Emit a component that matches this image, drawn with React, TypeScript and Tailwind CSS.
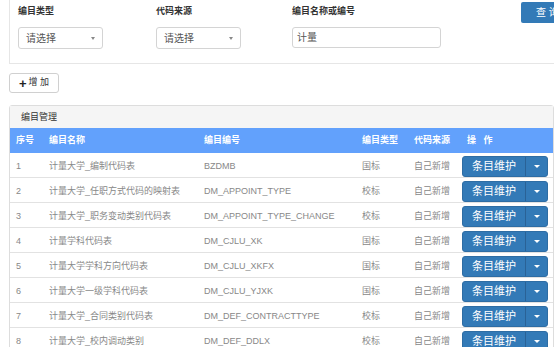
import React from "react";

const rows = [
  ["1", "计量大学_编制代码表", "BZDMB", "国标"],
  ["2", "计量大学_任职方式代码的映射表", "DM_APPOINT_TYPE", "校标"],
  ["3", "计量大学_职务变动类别代码表", "DM_APPOINT_TYPE_CHANGE", "校标"],
  ["4", "计量学科代码表", "DM_CJLU_XK", "国标"],
  ["5", "计量大学学科方向代码表", "DM_CJLU_XKFX", "国标"],
  ["6", "计量大学一级学科代码表", "DM_CJLU_YJXK", "国标"],
  ["7", "计量大学_合同类别代码表", "DM_DEF_CONTRACTTYPE", "校标"],
  ["8", "计量大学_校内调动类别", "DM_DEF_DDLX", "校标"],
];

const cols = "grid grid-cols-[32px_156px_158px_52px_48px_1fr]";

function Select() {
  return (
    <div className="mt-[10px] flex h-[22px] w-[85px] items-center justify-between rounded-[3px] border border-[#d4d4d4] bg-white pl-[7px] pr-[7px] text-[10px] text-[#555]">
      <span>请选择</span>
      <span className="h-0 w-0 border-l-[2.5px] border-r-[2.5px] border-t-[3px] border-l-transparent border-r-transparent border-t-[#888]" />
    </div>
  );
}

export default function App() {
  return (
    <div
      className="h-[347px] w-[554px] overflow-hidden bg-white"
      style={{ fontFamily: '"Liberation Sans", "Noto Sans CJK SC", sans-serif' }}
    >
      <div className="pl-[9px]">
        {/* search panel */}
        <div className="flex h-[64px] overflow-hidden border-b border-l border-[#e6e6e6]">
          <div className="ml-[8px] w-[138px] shrink-0">
            <div className="pt-[5px] text-[9px] font-bold leading-[12px] text-[#333]">编目类型</div>
            <Select />
          </div>
          <div className="w-[136px] shrink-0">
            <div className="pt-[5px] text-[9px] font-bold leading-[12px] text-[#333]">代码来源</div>
            <Select />
          </div>
          <div className="w-[229px] shrink-0">
            <div className="pt-[5px] text-[9px] font-bold leading-[12px] text-[#333]">编目名称或编号</div>
            <div className="mt-[10px] flex h-[21px] w-[149px] items-center rounded-[3px] border border-[#d4d4d4] pl-[4px] text-[10px] text-[#555]">
              计量
            </div>
          </div>
          <div className="mt-[2px] flex h-[21px] w-[50px] shrink-0 items-center rounded-[2px] bg-[#337ab7] pl-[15px] text-[10px] text-white">
            查&nbsp;询
          </div>
        </div>

        {/* add button */}
        <div className="mt-[9px] flex h-[20px] w-[50px] items-center rounded-[3px] border border-[#d0d0d0] bg-white pl-[9px] text-[9px] text-[#333]">
          <span className="mr-[2px] text-[13px] font-black leading-none text-[#222]">+</span>
          <span>增&nbsp;加</span>
        </div>

        {/* panel */}
        <div className="mt-[12px] rounded-t-[3px] border border-[#dddddd]">
          <div className="flex h-[22px] items-center bg-[#f5f5f5] pl-[11px] pt-[1px] text-[9px] text-[#333]">编目管理</div>
          <div className={`${cols} h-[25px] items-center bg-[#62a1fc] text-[9px] font-bold text-white`}>
            <div className="pl-[6px]">序号</div>
            <div className="pl-[7px]">编目名称</div>
            <div className="pl-[6px]">编目编号</div>
            <div className="pl-[6px]">编目类型</div>
            <div className="pl-[6px]">代码来源</div>
            <div className="pl-[11px]">操&nbsp;&nbsp;&nbsp;作</div>
          </div>
          {rows.map((r) => (
            <div key={r[0]} className={`${cols} h-[25px] items-start border-b border-[#e2e2e2] text-[9px] text-[#888]`}>
              <div className="pl-[6px] pt-[7px]">{r[0]}</div>
              <div className="pl-[7px] pt-[7px] whitespace-nowrap">{r[1]}</div>
              <div className="pl-[6px] pt-[7px] whitespace-nowrap">{r[2]}</div>
              <div className="pl-[6px] pt-[7px]">{r[3]}</div>
              <div className="pl-[6px] pt-[7px] whitespace-nowrap">自己新增</div>
              <div className="pl-[6px] pt-[3px]">
                <div className="flex h-[21px] w-[86px] overflow-hidden rounded-[3px] border border-[#2e6da4] bg-[#337ab7] text-white">
                  <div className="flex w-[62px] items-center justify-center text-[11px]">条目维护</div>
                  <div className="flex flex-1 items-center justify-center border-l border-[#2a6296]">
                    <span className="h-0 w-0 border-l-[3px] border-r-[3px] border-t-[3px] border-l-transparent border-r-transparent border-t-white" />
                  </div>
                </div>
              </div>
            </div>
          ))}
        </div>
      </div>
    </div>
  );
}
